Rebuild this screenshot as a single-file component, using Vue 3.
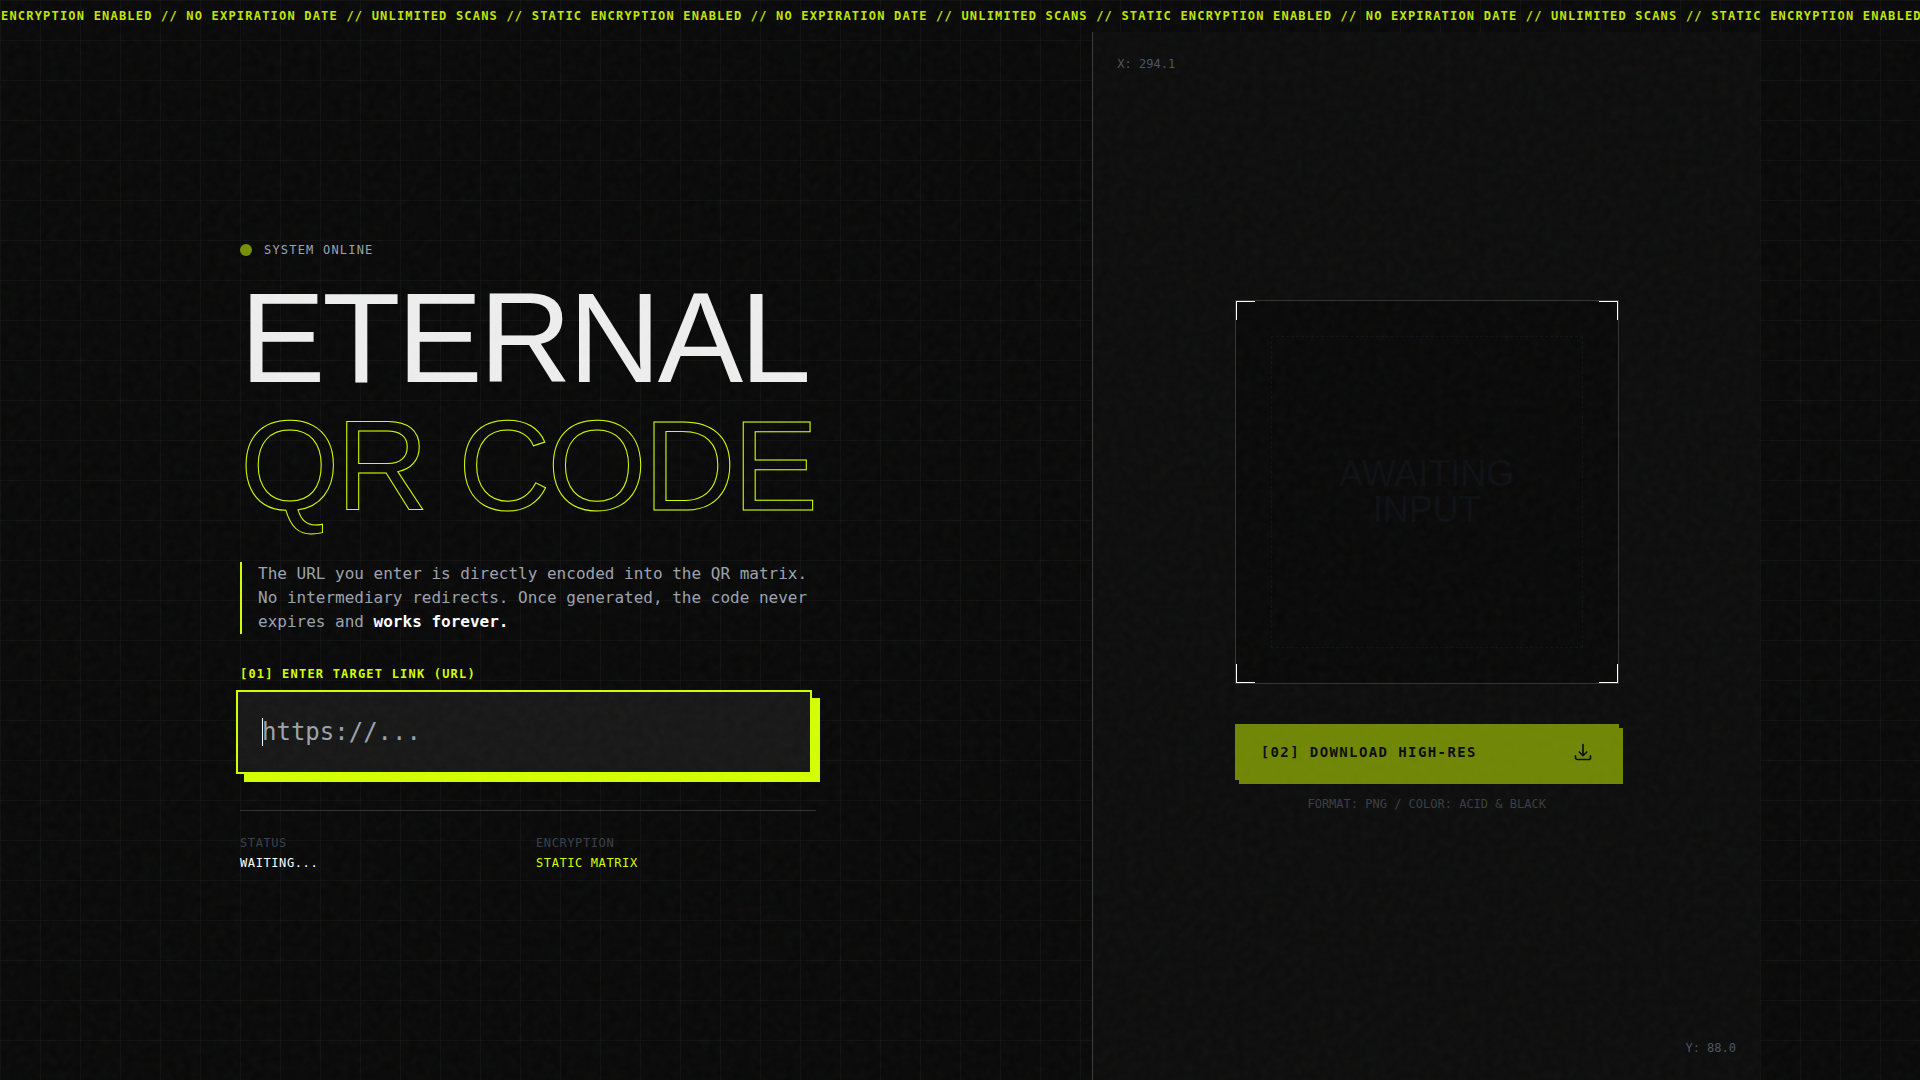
<script setup>
import { onMounted, ref } from 'vue'

const phrase = 'STATIC ENCRYPTION ENABLED // NO EXPIRATION DATE // UNLIMITED SCANS // '
const ticker = phrase.repeat(4)
const url = ref('')
const field = ref(null)
const focused = ref(false)

onMounted(() => field.value.focus())
</script>

<template>
  <div class="page">
    <header class="ticker"><span class="ticker-text">{{ ticker }}</span></header>

    <main class="layout">
      <section class="intro">
        <div class="content">
          <div class="online"><span class="dot"></span><span>SYSTEM ONLINE</span></div>
          <h1 class="title">
            <span>ETERNAL</span>
            <span class="outline">QR CODE</span>
          </h1>
          <p class="lead">
            The URL you enter is directly encoded into the QR matrix. No intermediary redirects. Once
            generated, the code never expires and <strong>works forever.</strong>
          </p>
          <label class="label" for="url">[01] ENTER TARGET LINK (URL)</label>
          <div class="field-box">
            <input
              id="url"
              ref="field"
              v-model="url"
              class="field"
              :class="{ empty: !url }"
              type="text"
              placeholder="https://..."
              autocomplete="off"
              @focus="focused = true"
              @blur="focused = false"
            />
            <span v-if="focused && !url" class="caret"></span>
          </div>
          <dl class="facts">
            <div>
              <dt>STATUS</dt>
              <dd>WAITING...</dd>
            </div>
            <div>
              <dt>ENCRYPTION</dt>
              <dd class="acid">STATIC MATRIX</dd>
            </div>
          </dl>
        </div>
      </section>

      <section class="preview">
        <span class="coord coord-x">X: 294.1</span>
        <span class="coord coord-y">Y: 88.0</span>
        <div class="stack">
          <div class="frame">
            <i class="corner tl"></i><i class="corner tr"></i><i class="corner bl"></i><i class="corner br"></i>
            <div class="placeholder">
              <span>AWAITING</span>
              <span>INPUT</span>
            </div>
          </div>
          <button class="download" type="button">
            <span>[02] DOWNLOAD HIGH-RES</span>
            <svg width="20" height="20" viewBox="0 0 24 24" fill="none" stroke="currentColor" stroke-width="2" stroke-linecap="round" stroke-linejoin="round" aria-hidden="true">
              <path d="M3 16.500v2.250A2.250 2.250 0 0 0 5.250 21h13.500A2.250 2.250 0 0 0 21 18.750V16.500M16.500 12 12 16.500 7.500 12M12 16.500V3" />
            </svg>
          </button>
          <p class="format">FORMAT: PNG / COLOR: ACID &amp; BLACK</p>
        </div>
      </section>
    </main>

    <svg class="noise" aria-hidden="true">
      <filter id="grain" x="0" y="0" width="100%" height="100%">
        <feTurbulence type="fractalNoise" baseFrequency="0.12" numOctaves="3" stitchTiles="stitch" />
      </filter>
      <rect width="100%" height="100%" filter="url(#grain)" />
    </svg>
  </div>
</template>

<style>
body {
  margin: 0;
  background: #0a0a0a;
}
</style>

<style scoped>
.page {
  --acid: #d4ff00;
  --line: #333;
  display: flex;
  flex-direction: column;
  min-height: 100vh;
  overflow: hidden;
  position: relative;
  background-color: #0a0a0a;
  background-image:
    linear-gradient(rgba(255, 255, 255, 0.03) 1px, transparent 1px),
    linear-gradient(90deg, rgba(255, 255, 255, 0.03) 1px, transparent 1px);
  background-size: 40px 40px;
  color: #fff;
  font-family: "DejaVu Sans Mono", monospace;
  font-size: 12px;
  line-height: 16px;
}

.ticker {
  height: 32px;
  line-height: 32px;
  overflow: hidden;
  white-space: pre;
  color: var(--acid);
  font-weight: 700;
  letter-spacing: 0.1em;
}

.ticker-text {
  margin-left: -58px;
  opacity: 0.9;
}

.layout {
  flex: 1;
  display: grid;
  grid-template-columns: 7fr 5fr;
  width: 100%;
  max-width: 1600px;
  margin: 0 auto;
}

.intro {
  display: flex;
  align-items: center;
  padding: 0 80px;
  border-right: 1px solid #3c3c3c;
}

.content {
  width: 100%;
  max-width: 576px;
}

.online {
  display: flex;
  align-items: center;
  gap: 12px;
  margin-bottom: 16px;
  color: #9ca3af;
  letter-spacing: 0.1em;
}

.dot {
  width: 12px;
  height: 12px;
  border-radius: 50%;
  background: var(--acid);
  opacity: 0.55;
}

.title {
  margin: 0 0 32px;
  color: #eee;
  font: 400 128px/128px "Liberation Sans", sans-serif;
  letter-spacing: -0.025em;
  white-space: nowrap;
}

.title span {
  display: block;
}

.title .outline {
  color: transparent;
  -webkit-text-stroke: 1px var(--acid);
}

.lead {
  margin: 0 0 32px;
  padding-left: 16px;
  border-left: 2px solid var(--acid);
  color: #9ca3af;
  font-size: 16px;
  line-height: 24px;
}

.lead strong {
  color: #fff;
}

.label {
  display: block;
  margin-bottom: 12px;
  color: var(--acid);
  font-weight: 700;
  letter-spacing: 0.1em;
}

.field-box {
  position: relative;
}

.field {
  display: block;
  box-sizing: border-box;
  width: 100%;
  height: 84px;
  padding: 24px;
  border: 2px solid var(--line);
  border-radius: 0;
  outline: 0;
  background: #181818;
  color: #fff;
  font: 24px/32px "DejaVu Sans Mono", monospace;
}

.field.empty {
  caret-color: transparent;
}

.field::placeholder {
  color: #9ca3af;
  opacity: 1;
}

.field-box:focus-within {
  transform: translate(-4px, -4px);
}

.field:focus {
  border-color: var(--acid);
  box-shadow: 8px 8px 0 var(--acid);
}

.caret {
  position: absolute;
  top: 28px;
  left: 26px;
  width: 1px;
  height: 28px;
  background: #fff;
  pointer-events: none;
}

.facts {
  display: grid;
  grid-template-columns: 1fr 1fr;
  gap: 16px;
  margin: 32px 0 0;
  padding-top: 24px;
  border-top: 1px solid var(--line);
  letter-spacing: 0.05em;
}

.facts dt {
  margin-bottom: 4px;
  color: #374151;
}

.facts dd {
  margin: 0;
}

.facts .acid {
  color: var(--acid);
}

.preview {
  position: relative;
  display: flex;
  align-items: center;
  justify-content: center;
  background: #0e0e0e;
}

.coord {
  position: absolute;
  color: #4b5563;
}

.coord-x {
  top: 24px;
  left: 24px;
}

.coord-y {
  right: 24px;
  bottom: 24px;
}

.stack {
  width: 384px;
}

.frame {
  position: relative;
  box-sizing: border-box;
  aspect-ratio: 1;
  margin-bottom: 40px;
  padding: 35px;
  border: 1px solid var(--line);
  background: #0a0a0a;
}

.corner {
  position: absolute;
  box-sizing: border-box;
  width: 19px;
  height: 19px;
  border: 0 solid #fff;
}

.tl {
  top: 0;
  left: 0;
  border-width: 1px 0 0 1px;
}

.tr {
  top: 0;
  right: 0;
  border-width: 1px 1px 0 0;
}

.bl {
  bottom: 0;
  left: 0;
  border-width: 0 0 1px 1px;
}

.br {
  right: 0;
  bottom: 0;
  border-width: 0 1px 1px 0;
}

.placeholder {
  display: flex;
  flex-direction: column;
  align-items: center;
  justify-content: center;
  box-sizing: border-box;
  height: 100%;
  border: 1px dashed #111315;
  color: #0e1115;
  font: 36px/36px "Liberation Sans", sans-serif;
}

.download {
  display: flex;
  align-items: center;
  justify-content: space-between;
  width: 100%;
  height: 56px;
  padding: 0 26px;
  border: 0;
  background: var(--acid);
  box-shadow: 4px 4px 0 var(--acid);
  color: #0a0a0a;
  font: 700 14px/20px "DejaVu Sans Mono", monospace;
  letter-spacing: 0.1em;
  opacity: 0.5;
}

.format {
  margin: 16px 0 0;
  color: #3b3e44;
  text-align: center;
}

.noise {
  position: absolute;
  inset: 0;
  width: 100%;
  height: 100%;
  opacity: 0.03;
  pointer-events: none;
}
</style>
